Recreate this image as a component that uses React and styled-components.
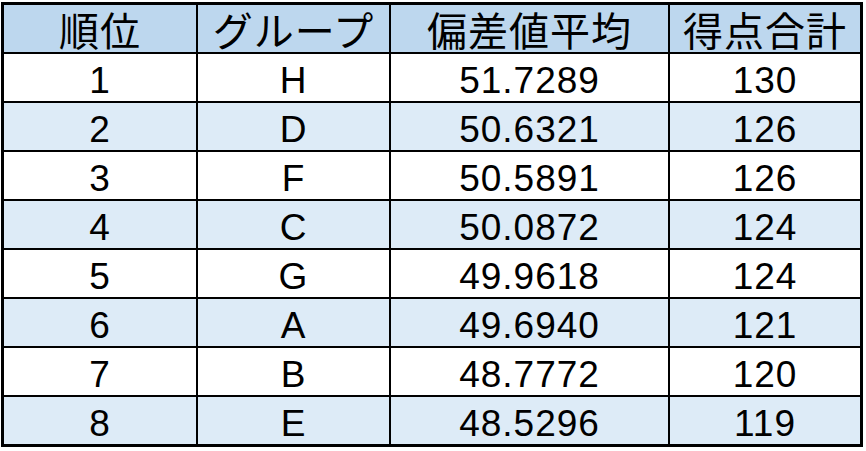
import React from "react";
import styled, { createGlobalStyle } from "styled-components";

const Global = createGlobalStyle`
  html, body { margin: 0; padding: 0; background: #ffffff; }
  body { font-family: "Liberation Sans", "Noto Sans CJK JP", sans-serif; }
`;

const Sheet = styled.div`
  width: 866px;
  height: 451px;
  padding: 2px 0 0 1px;
  box-sizing: border-box;
  background: #ffffff;
`;

const Table = styled.div`
  display: grid;
  grid-template-columns: 192px 191px 277px 190px;
  grid-auto-rows: 47px;
  gap: 2px;
  width: 856px;
  background: #000000;
  border: 3px solid #000000;
`;

const Cell = styled.div`
  display: flex;
  align-items: center;
  justify-content: center;
  background: ${(p) => (p.$head ? "#BDD7EE" : p.$alt ? "#DDEBF7" : "#FFFFFF")};
  color: #000000;
  font-family: ${(p) =>
    p.$head
      ? '"Noto Sans CJK JP", sans-serif'
      : '"Liberation Sans", "Noto Sans CJK JP", sans-serif'};
  font-size: ${(p) => (p.$head ? "40px" : "37px")};
  line-height: 1;
  padding-top: ${(p) => (p.$head ? "1px" : "5px")};
  box-sizing: border-box;
  letter-spacing: ${(p) => (p.$head ? "1px" : "1px")};
  white-space: nowrap;
`;

const headers = ["順位", "グループ", "偏差値平均", "得点合計"];
const rows = [
  ["1", "H", "51.7289", "130"],
  ["2", "D", "50.6321", "126"],
  ["3", "F", "50.5891", "126"],
  ["4", "C", "50.0872", "124"],
  ["5", "G", "49.9618", "124"],
  ["6", "A", "49.6940", "121"],
  ["7", "B", "48.7772", "120"],
  ["8", "E", "48.5296", "119"],
];

export default function App() {
  return (
    <>
      <Global />
      <Sheet>
        <Table>
          {headers.map((h) => (
            <Cell key={h} $head>
              {h}
            </Cell>
          ))}
          {rows.map((r, i) =>
            r.map((v, j) => (
              <Cell key={`${i}-${j}`} $alt={i % 2 === 1}>
                {v}
              </Cell>
            ))
          )}
        </Table>
      </Sheet>
    </>
  );
}
